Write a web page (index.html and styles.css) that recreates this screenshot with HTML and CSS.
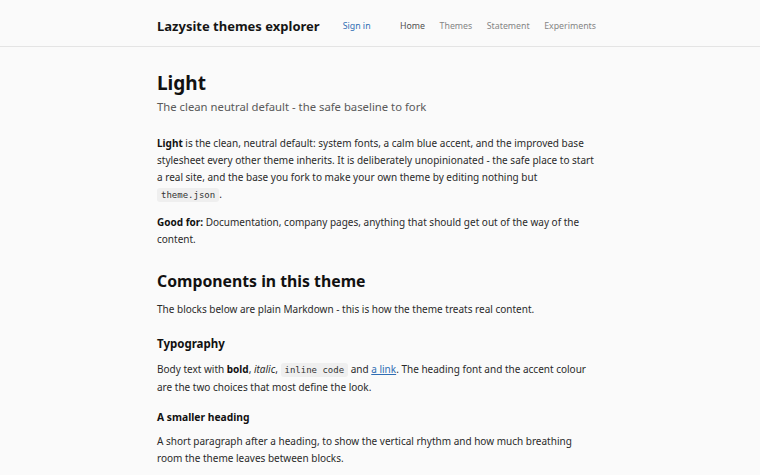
FILE: index.html
```html
<!DOCTYPE html>
<html lang="en">
<head>
<meta charset="utf-8">
<title>Light - Lazysite themes explorer</title>
<link rel="stylesheet" href="styles.css">
</head>
<body>
<header class="site-header">
  <div class="wrap header-row">
    <a class="brand" href="#">Lazysite themes explorer</a>
    <a class="signin" href="#">Sign in</a>
    <nav class="nav">
      <a class="nav-link active" href="#">Home</a>
      <a class="nav-link" href="#">Themes</a>
      <a class="nav-link" href="#">Statement</a>
      <a class="nav-link" href="#">Experiments</a>
    </nav>
  </div>
</header>
<main class="wrap content">
  <h1 class="title">Light</h1>
  <p class="subtitle">The clean neutral default - the safe baseline to fork</p>

  <p class="lead"><strong>Light</strong> is the clean, neutral default: system fonts, a calm blue accent, and the improved base stylesheet every other theme inherits. It is deliberately unopinionated - the safe place to start a real site, and the base you fork to make your own theme by editing nothing but <code>theme.json</code>.</p>
  <p><strong>Good for:</strong> Documentation, company pages, anything that should get out of the way of the content.</p>

  <h2>Components in this theme</h2>
  <p>The blocks below are plain Markdown - this is how the theme treats real content.</p>

  <h3>Typography</h3>
  <p>Body text with <strong>bold</strong>, <em>italic</em>, <code>inline code</code> and <a href="#">a link</a>. The heading font and the accent colour are the two choices that most define the look.</p>

  <h4>A smaller heading</h4>
  <p>A short paragraph after a heading, to show the vertical rhythm and how much breathing room the theme leaves between blocks.</p>
</main>
</body>
</html>
```
FILE: styles.css
```css
* { box-sizing: border-box; }

html, body {
  margin: 0;
  padding: 0;
}

body {
  background: #fafafa;
  color: #2a2a2a;
  font-family: "Noto Sans", "Open Sans", sans-serif;
  font-size: 10px;
  line-height: 17px;
}

.wrap {
  width: 446px;
  margin: 0 auto;
}

/* top bar */
.site-header {
  background: #fafafa;
  border-bottom: 1px solid #e4e4e4;
  height: 47px;
}

.header-row {
  display: flex;
  align-items: center;
  height: 46px;
  padding-top: 6px;
  padding-right: 7px;
}

.brand {
  font-size: 13px;
  font-weight: 700;
  color: #151515;
  text-decoration: none;
}

.signin {
  margin-left: 23px;
  font-size: 8.8px;
  color: #2f6db3;
  text-decoration: none;
}

.nav {
  margin-left: auto;
  display: flex;
  gap: 14.5px;
}

.nav-link {
  font-size: 8.8px;
  color: #858585;
  text-decoration: none;
}

.nav-link.active {
  color: #505050;
}

/* article */
.content {
  padding-top: 24px;
  padding-right: 5px;
}

.title {
  margin: 0;
  font-size: 19px;
  line-height: 24px;
  font-weight: 700;
  color: #111;
}

.subtitle {
  margin: 4px 0 0;
  font-size: 11.3px;
  line-height: 16px;
  color: #595959;
}

p {
  margin: 0 0 10px;
}

.lead {
  margin-top: 20px;
}

strong { font-weight: 700; color: #111; }

code {
  font-family: "DejaVu Sans Mono", "Liberation Mono", monospace;
  font-size: 9px;
  background: #efefef;
  border-radius: 3px;
  padding: 2px 4px;
  color: #333;
}

a { color: #2f6db3; }

h2 {
  margin: 23px 0 9.5px;
  font-size: 15.8px;
  line-height: 20px;
  font-weight: 700;
  color: #111;
}

h3 {
  margin: 18px 0 9.5px;
  font-size: 11.5px;
  line-height: 16px;
  font-weight: 700;
  color: #111;
}

h4 {
  margin: 13px 0 8px;
  font-size: 10.3px;
  line-height: 16px;
  font-weight: 700;
  color: #111;
}
```
